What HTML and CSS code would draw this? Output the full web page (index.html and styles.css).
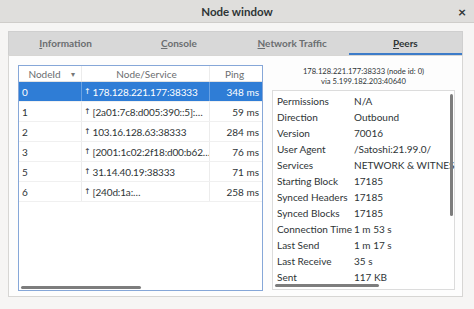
FILE: index.html
```html
<!DOCTYPE html>
<html>
<head>
<meta charset="utf-8">
<link rel="stylesheet" href="styles.css">
</head>
<body>
<div class="titlebar">
  <span class="title">Node window</span>
  <span class="close">×</span>
</div>
<div class="main">
  <div class="tabs">
    <div class="tab"><u>I</u>nformation</div>
    <div class="tab"><u>C</u>onsole</div>
    <div class="tab"><u>N</u>etwork Traffic</div>
    <div class="tab active"><u>P</u>eers</div>
  </div>
  <div class="panel">
    <div class="table">
      <div class="row head">
        <div class="c1">NodeId <span class="sort">▾</span></div>
        <div class="c2">Node/Service</div>
        <div class="c3">Ping</div>
      </div>
      <div class="row sel"><div class="c1">0</div><div class="c2"><span class="arr">↑</span>178.128.221.177:38333</div><div class="c3">348 ms</div></div>
      <div class="row"><div class="c1">1</div><div class="c2"><span class="arr">↑</span>[2a01:7c8:d005:390::5]:…</div><div class="c3">59 ms</div></div>
      <div class="row"><div class="c1">2</div><div class="c2"><span class="arr">↑</span>103.16.128.63:38333</div><div class="c3">284 ms</div></div>
      <div class="row"><div class="c1">3</div><div class="c2"><span class="arr">↑</span>[2001:1c02:2f18:d00:b62…</div><div class="c3">76 ms</div></div>
      <div class="row"><div class="c1">5</div><div class="c2"><span class="arr">↑</span>31.14.40.19:38333</div><div class="c3">71 ms</div></div>
      <div class="row"><div class="c1">6</div><div class="c2"><span class="arr">↑</span>[240d:1a:…</div><div class="c3">258 ms</div></div>
      <div class="hscroll"><div class="thumb"></div></div>
    </div>
    <div class="right">
      <div class="peer">178.128.221.177:38333 (node id: 0)<br>via 5.199.182.203:40640</div>
      <div class="details">
        <div class="grid">
          <span>Permissions</span><span>N/A</span>
          <span>Direction</span><span>Outbound</span>
          <span>Version</span><span>70016</span>
          <span>User Agent</span><span>/Satoshi:21.99.0/</span>
          <span>Services</span><span>NETWORK &amp; WITNES</span>
          <span>Starting Block</span><span>17185</span>
          <span>Synced Headers</span><span>17185</span>
          <span>Synced Blocks</span><span>17185</span>
          <span>Connection Time</span><span>1 m 53 s</span>
          <span>Last Send</span><span>1 m 17 s</span>
          <span>Last Receive</span><span>35 s</span>
          <span>Sent</span><span>117 KB</span>
        </div>
        <div class="vthumb"></div>
        <div class="hthumb"></div>
      </div>
    </div>
  </div>
</div>
</body>
</html>
```
FILE: styles.css
```css
* { box-sizing: border-box; }
html, body { margin: 0; padding: 0; }
body {
  width: 474px; height: 309px; overflow: hidden;
  background: #f6f5f4;
  font-family: Lato, "Noto Sans", sans-serif;
  font-size: 10px;
  color: #2e3436;
}
.titlebar {
  height: 23px;
  background: #dfdedc;
  border-bottom: 1px solid #cfcdca;
  display: flex; align-items: center; justify-content: center;
  position: relative;
}
.title { font-weight: bold; font-size: 11.5px; color: #2e3436; }
.close {
  position: absolute; right: 8px; top: 3px;
  font-size: 14px; font-weight: bold; color: #2e3436;
}
.main { padding: 8px 11px 0 8px; }
.tabs {
  display: flex; height: 24px;
  background: #d8d8d8;
  border: 1px solid #cfcfcf; border-bottom: none;
}
.tab {
  flex: 1; text-align: center;
  font-weight: bold; font-size: 10px; color: #6b6e70;
  line-height: 22px;
}
.tab u { text-decoration: underline; text-decoration-thickness: 1px; text-underline-offset: 1px; }
.tab.active {
  color: #2e3436;
  border-bottom: 2px solid #3d7cc9;
}
.panel {
  height: 242px;
  background: #fdfdfd;
  border: 1px solid #d7d6d4;
  display: flex;
  padding: 9px 7px 6px 9px;
  gap: 9px;
}
.table {
  width: 248px; height: 226px;
  border: 1px solid #86a7d8;
  background: #fff;
  position: relative;
}
.row { display: flex; height: 20px; align-items: center; border-bottom: 1px solid #f0f0f0; }
.row.head { height: 16px; color: #6a6d70; border-bottom: 1px solid #e2e2e2; }
.c1 { width: 63px; padding-left: 3px; height: 100%; display: flex; align-items: center; border-right: 1px solid #ececec; }
.row.head .c1 { justify-content: center; gap: 10px; }
.c2 { width: 128px; padding-left: 2px; height: 100%; display: flex; align-items: center; border-right: 1px solid #ececec; white-space: nowrap; overflow: hidden; letter-spacing: -0.15px; }
.row.head .c2 { justify-content: center; letter-spacing: 0; }
.c3 { width: 52px; padding-right: 3px; height: 100%; display: flex; align-items: center; justify-content: flex-end; }
.row.head .c3 { justify-content: center; }
.sort { font-size: 8px; color: #777; }
.arr { font-size: 8px; margin-right: 2px; font-family: "DejaVu Sans", sans-serif; }
.row.sel { background: #2f7dd6; color: #fff; }
.row.sel .c1, .row.sel .c2 { border-right-color: #6aa2e3; }
.hscroll { position: absolute; left: 2px; bottom: 1px; width: 120px; height: 3px; }
.thumb { width: 100%; height: 100%; background: #7d7d7d; border-radius: 2px; }
.right { flex: 1; display: flex; flex-direction: column; }
.peer { text-align: center; font-size: 7.6px; line-height: 10px; margin-top: 1px; height: 25px; color: #2e3436; }
.details {
  width: 183px; height: 205px;
  border: 1px solid #dcdcdc;
  background: #fff;
  position: relative;
  padding: 2px 0 0 4px;
}
.grid {
  display: grid; grid-template-columns: 77px 1fr;
  grid-auto-rows: 16px; align-items: center;
  white-space: nowrap;
}
.vthumb { position: absolute; right: 1px; top: 3px; width: 3px; height: 122px; background: #7d7d7d; border-radius: 2px; }
.hthumb { position: absolute; left: 2px; bottom: 2px; width: 104px; height: 3px; background: #7d7d7d; border-radius: 2px; }
```
